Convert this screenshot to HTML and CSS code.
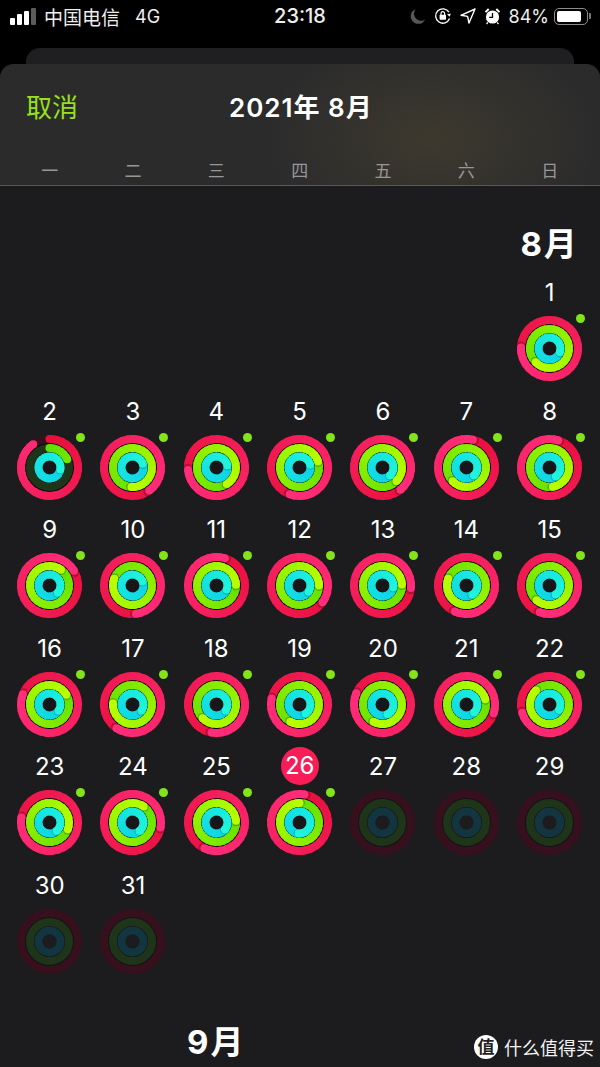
FILE: index.html
```html
<!DOCTYPE html>
<html lang="zh-CN">
<head>
<meta charset="UTF-8">
<meta name="viewport" content="width=device-width, initial-scale=1.0">
<title>2021年8月</title>
<link rel="stylesheet" href="styles.css">
</head>
<body>

<div class="statusbar">
    <div class="status-left">
        <div class="signal"><i class="b1"></i><i class="b2"></i><i class="b3"></i><i class="b4"></i></div>
        <span class="carrier">中国电信</span>
        <span class="net">4G</span>
    </div>
    <div class="clock">23:18</div>
    <div class="status-right">
        <svg class="ico" width="17" height="17" viewBox="0 0 17 17"><path d="M6.5 1.2A7.6 7.6 0 1 0 16.2 11.6 7.2 7.2 0 0 1 6.5 1.2Z" fill="#57575a"/></svg>
        <svg class="ico" width="18" height="18" viewBox="0 0 18 18" fill="none"><path d="M15.6 11.6A7.2 7.2 0 1 1 15 5.2" stroke="#fff" stroke-width="1.3"/><path d="M13.2 6.9h3.9L15.3 9.8Z" fill="#fff" transform="rotate(-12 15 8)"/><rect x="5.6" y="7.8" width="6.4" height="5" rx="0.8" fill="#fff"/><path d="M7 8V6.4a1.8 1.8 0 0 1 3.6 0V8" stroke="#fff" stroke-width="1.2"/></svg>
        <svg class="ico" width="16" height="16" viewBox="0 0 16 16" fill="none"><path d="M15 1 1 7.3l6.6 1.1L9 15Z" stroke="#fff" stroke-width="1.4" stroke-linejoin="round"/></svg>
        <svg class="ico" width="17" height="18" viewBox="0 0 17 18"><circle cx="8.5" cy="10" r="6.6" fill="#fff"/><path d="M8.5 6v4.3H5.2" fill="none" stroke="#000" stroke-width="1.3"/><path d="M0.8 4.4 4 1.3 5.4 2.7 2.2 5.8ZM16.2 4.4 13 1.3 11.6 2.7 14.8 5.8Z" fill="#fff"/><path d="M3.8 15.4 2.6 17M13.2 15.4 14.4 17" stroke="#fff" stroke-width="1.3"/></svg>
        <span class="pct">84%</span>
        <div class="battery"><div class="battery-fill"></div></div>
        <div class="battery-nub"></div>
    </div>
</div>

<div class="sheet-back"></div>

<div class="sheet">
    <div class="sheet-head">
        <div class="nav">
            <span class="cancel">取消</span>
            <span class="nav-title">2021年 8月</span>
        </div>
        <div class="weekdays">
            <span>一</span><span>二</span><span>三</span><span>四</span><span>五</span><span>六</span><span>日</span>
        </div>
    </div>

    <div class="calendar">
        <div class="month month-aug">8月</div>

        <div class="day day-first"><span class="num">1</span><div class="rings" data-r="632,585,470"></div></div>

        <div class="day"><span class="num">2</span><div class="rings" data-r="325,65,460"></div></div>
        <div class="day"><span class="num">3</span><div class="rings" data-r="504,543,430"></div></div>
        <div class="day"><span class="num">4</span><div class="rings" data-r="625,508,440"></div></div>
        <div class="day"><span class="num">5</span><div class="rings" data-r="560,432,435"></div></div>
        <div class="day"><span class="num">6</span><div class="rings" data-r="501,494,497"></div></div>
        <div class="day"><span class="num">7</span><div class="rings" data-r="373,585,497"></div></div>
        <div class="day"><span class="num">8</span><div class="rings" data-r="378,530,505"></div></div>

        <div class="day"><span class="num">9</span><div class="rings" data-r="419,396,491"></div></div>
        <div class="day"><span class="num">10</span><div class="rings" data-r="533,650,428"></div></div>
        <div class="day"><span class="num">11</span><div class="rings" data-r="377,448,472"></div></div>
        <div class="day"><span class="num">12</span><div class="rings" data-r="486,450,485"></div></div>
        <div class="day"><span class="num">13</span><div class="rings" data-r="455,447,460"></div></div>
        <div class="day"><span class="num">14</span><div class="rings" data-r="564,650,508"></div></div>
        <div class="day"><span class="num">15</span><div class="rings" data-r="560,581,506"></div></div>

        <div class="day"><span class="num">16</span><div class="rings" data-r="651,420,485"></div></div>
        <div class="day"><span class="num">17</span><div class="rings" data-r="574,633,485"></div></div>
        <div class="day"><span class="num">18</span><div class="rings" data-r="550,585,484"></div></div>
        <div class="day"><span class="num">19</span><div class="rings" data-r="642,568,507"></div></div>
        <div class="day"><span class="num">20</span><div class="rings" data-r="653,567,513"></div></div>
        <div class="day"><span class="num">21</span><div class="rings" data-r="468,434,497"></div></div>
        <div class="day"><span class="num">22</span><div class="rings" data-r="613,676,480"></div></div>

        <div class="day"><span class="num">23</span><div class="rings" data-r="640,470,500"></div></div>
        <div class="day"><span class="num">24</span><div class="rings" data-r="460,395,500"></div></div>
        <div class="day"><span class="num">25</span><div class="rings" data-r="565,445,490"></div></div>
        <div class="day"><span class="num today">26</span><div class="rings" data-r="370,360,545"></div></div>
        <div class="day"><span class="num">27</span><div class="rings future"></div></div>
        <div class="day"><span class="num">28</span><div class="rings future"></div></div>
        <div class="day"><span class="num">29</span><div class="rings future"></div></div>

        <div class="day"><span class="num">30</span><div class="rings future"></div></div>
        <div class="day"><span class="num">31</span><div class="rings future"></div></div>

        <div class="month month-sep">9月</div>
    </div>
</div>

<div class="watermark">
    <span class="wm-logo">值</span>
    <span class="wm-text">什么值得买</span>
</div>

<script src="app.js"></script>
</body>
</html>
```

FILE: styles.css
```css
* {
    box-sizing: border-box;
}
html, body {
    margin: 0;
    height: 1067px;
    overflow: hidden;
}
body {
    position: relative;
    background-color: #000;
    color: #fff;
    font-family: "Inter", "Noto Sans CJK SC", sans-serif;
}

/* status bar */
.statusbar {
    display: grid;
    grid-template-columns: 1fr auto 1fr;
    align-items: center;
    height: 32px;
    margin-bottom: 16px;
    font-size: 18px;
    color: #eee;
}
.status-left {
    display: flex;
    align-items: center;
    padding-left: 10px;
}
.signal {
    display: flex;
    align-items: flex-end;
    gap: 2px;
    height: 17px;
    margin-right: 8px;
}
.signal i {
    display: block;
    width: 5px;
    border-radius: 1px;
    background-color: #fff;
}
.b1 { height: 7px; }
.b2 { height: 11px; }
.b3 { height: 14px; }
.signal .b4 { height: 17px; background-color: #5c5c5c; }
.carrier {
    font-size: 19px;
    margin-right: 15px;
}
.net {
    font-size: 18px;
}
.clock {
    font-size: 20px;
    font-weight: 500;
}
.status-right {
    display: flex;
    align-items: center;
    justify-content: flex-end;
    padding-right: 9px;
}
.ico {
    margin-left: 8px;
}
.pct {
    margin-left: 8px;
    font-size: 18px;
}
.battery {
    width: 34px;
    height: 17px;
    margin-left: 5px;
    padding: 2px;
    border: 1.5px solid #8a8a8a;
    border-radius: 5px;
}
.battery-fill {
    width: 84%;
    height: 100%;
    border-radius: 2px;
    background-color: #fff;
}
.battery-nub {
    width: 2px;
    height: 6px;
    margin-left: 1px;
    border-radius: 0 1px 1px 0;
    background-color: #777;
}

/* sheets */
.sheet-back {
    height: 16px;
    margin: 0 26px;
    border-radius: 14px 14px 0 0;
    background-color: #1f1f21;
}
.sheet {
    height: 1003px;
    border-radius: 14px 14px 0 0;
    background-color: #1c1c1e;
    overflow: hidden;
}
.sheet-head {
    height: 122px;
    padding-top: 22px;
    border-bottom: 1px solid #58585a;
    background-color: #2b2b2c;
    background-image: radial-gradient(ellipse 170px 110px at 72% 62%, #3d392e, rgba(61, 57, 46, 0));
}
.nav {
    position: relative;
    height: 44px;
    padding-left: 26px;
    line-height: 44px;
}
.cancel {
    font-size: 26px;
    color: #97e11b;
}
.nav-title {
    position: absolute;
    left: 229px;
    top: 0;
    font-size: 26px;
    font-weight: 600;
    letter-spacing: 1px;
}
.weekdays {
    display: grid;
    grid-template-columns: repeat(7, 83.33px);
    margin-top: 31px;
    padding-left: 8px;
    font-size: 17px;
    line-height: 20px;
    text-align: center;
    color: #979797;
}

/* calendar */
.calendar {
    display: grid;
    grid-template-columns: repeat(7, 83.33px);
    grid-template-rows: 87px;
    grid-auto-rows: 118.5px;
    padding-left: 8px;
    text-align: center;
}
.month {
    padding-top: 38px;
    font-size: 33px;
    font-weight: 700;
    letter-spacing: 2px;
    line-height: 40px;
}
.month-aug {
    grid-column: 7;
    grid-row: 1;
}
.month-sep {
    grid-column: 3;
    grid-row: 8;
}
.day {
    display: flex;
    flex-direction: column;
    align-items: center;
}
.day-first {
    grid-column: 7;
}
.num {
    width: 38px;
    height: 38px;
    border-radius: 50%;
    font-size: 24px;
    line-height: 40px;
}
.today {
    background-color: #f81d56;
    line-height: 38px;
}

/* activity rings */
.rings {
    position: relative;
    width: 65px;
    height: 65px;
    margin-top: 5px;
}
.rings svg {
    display: block;
}
.disc { fill: #09090b; }
.hole { fill: #17171a; }
.future .disc { fill: #131315; }
.future .hole { fill: #1c1c1f; }
.track {
    fill: none;
    stroke-width: 8;
}
.track-outer { stroke: #36111d; }
.track-mid { stroke: #1f351a; }
.track-inner { stroke: #123540; }
.goal-dot {
    position: absolute;
    top: -2px;
    right: -3px;
    width: 9px;
    height: 9px;
    border-radius: 50%;
    background-color: #84e41a;
}

/* watermark */
.watermark {
    position: absolute;
    right: 6px;
    bottom: 7px;
    display: flex;
    align-items: center;
    gap: 6px;
}
.wm-logo {
    width: 24px;
    height: 24px;
    border-radius: 50%;
    background-color: #fff;
    color: #222;
    font-size: 17px;
    font-weight: 700;
    line-height: 24px;
    text-align: center;
}
.wm-text {
    font-size: 18px;
    color: #f2f2f2;
}
```

FILE: app.js
```js
// radius, start and end colour of each ring
const ringDefs = [
    { name: 'outer', r: 28.5, c1: '#e8103c', c2: '#ff2d7a' },
    { name: 'mid', r: 19.5, c1: '#60e000', c2: '#b9ff00' },
    { name: 'inner', r: 11, c1: '#0cd0e8', c2: '#1ff5dc' }
];
const CENTER = 32.5;
const STEP = 12;

function hex(c) {
    return [1, 3, 5].map(i => parseInt(c.substr(i, 2), 16));
}

function mix(a, b, t) {
    const ca = hex(a), cb = hex(b);
    const v = ca.map((x, i) => Math.round(x + (cb[i] - x) * t));
    return '#' + v.map(x => x.toString(16).padStart(2, '0')).join('');
}

function point(r, deg) {
    const t = (deg - 90) * Math.PI / 180;
    return [CENTER + r * Math.cos(t), CENTER + r * Math.sin(t)].map(n => n.toFixed(2));
}

function arc(r, from, to, colour) {
    const [x1, y1] = point(r, from);
    const [x2, y2] = point(r, to);
    return `<path d="M${x1} ${y1}A${r} ${r} 0 0 1 ${x2} ${y2}" fill="none" stroke="${colour}" stroke-width="8"/>`;
}

function dot(r, deg, colour, radius = 4, extra = '') {
    const [x, y] = point(r, deg);
    return `<circle cx="${x}" cy="${y}" r="${radius}" fill="${colour}" ${extra}/>`;
}

// sweep is in degrees from 12 o'clock, over 360 means the ring has lapped
function drawRing(def, sweep) {
    const { name, r, c1, c2 } = def;
    let out = `<circle class="track track-${name}" cx="${CENTER}" cy="${CENTER}" r="${r}"/>`;
    if (sweep === undefined) return out;

    const lapped = sweep >= 360;
    const start = lapped ? sweep - 360 : 0;
    const span = lapped ? 360 : sweep;
    const from = lapped ? mix(c1, c2, (start / sweep) * 0.3) : c1;
    const end = lapped ? c2 : mix(c1, c2, sweep / 360);

    if (!lapped) out += dot(r, 0, from);
    const n = Math.max(1, Math.ceil(span / STEP));
    for (let i = 0; i < n; i++) {
        const a = start + span * i / n;
        const b = start + span * (i + 1) / n;
        // segments overlap a little so no seam shows between them
        out += arc(r, a, i === n - 1 ? b : b + 5, mix(from, end, (i + 0.5) / n));
    }
    if (lapped) out += dot(r, sweep + 4, '#000', 4.2, 'opacity="0.22"');
    out += dot(r, sweep, end);
    return out;
}

document.querySelectorAll('.rings').forEach(el => {
    const r = el.dataset.r ? el.dataset.r.split(',').map(Number) : [];
    let svg = `<svg width="65" height="65" viewBox="0 0 65 65">`;
    svg += `<circle class="disc" cx="${CENTER}" cy="${CENTER}" r="31"/>`;
    svg += `<circle class="hole" cx="${CENTER}" cy="${CENTER}" r="7"/>`;
    ringDefs.forEach((def, i) => { svg += drawRing(def, r[i]); });
    svg += '</svg>';
    el.innerHTML = svg;
    if (r.length) {
        const goal = document.createElement('div');
        goal.className = 'goal-dot';
        el.appendChild(goal);
    }
});
```
